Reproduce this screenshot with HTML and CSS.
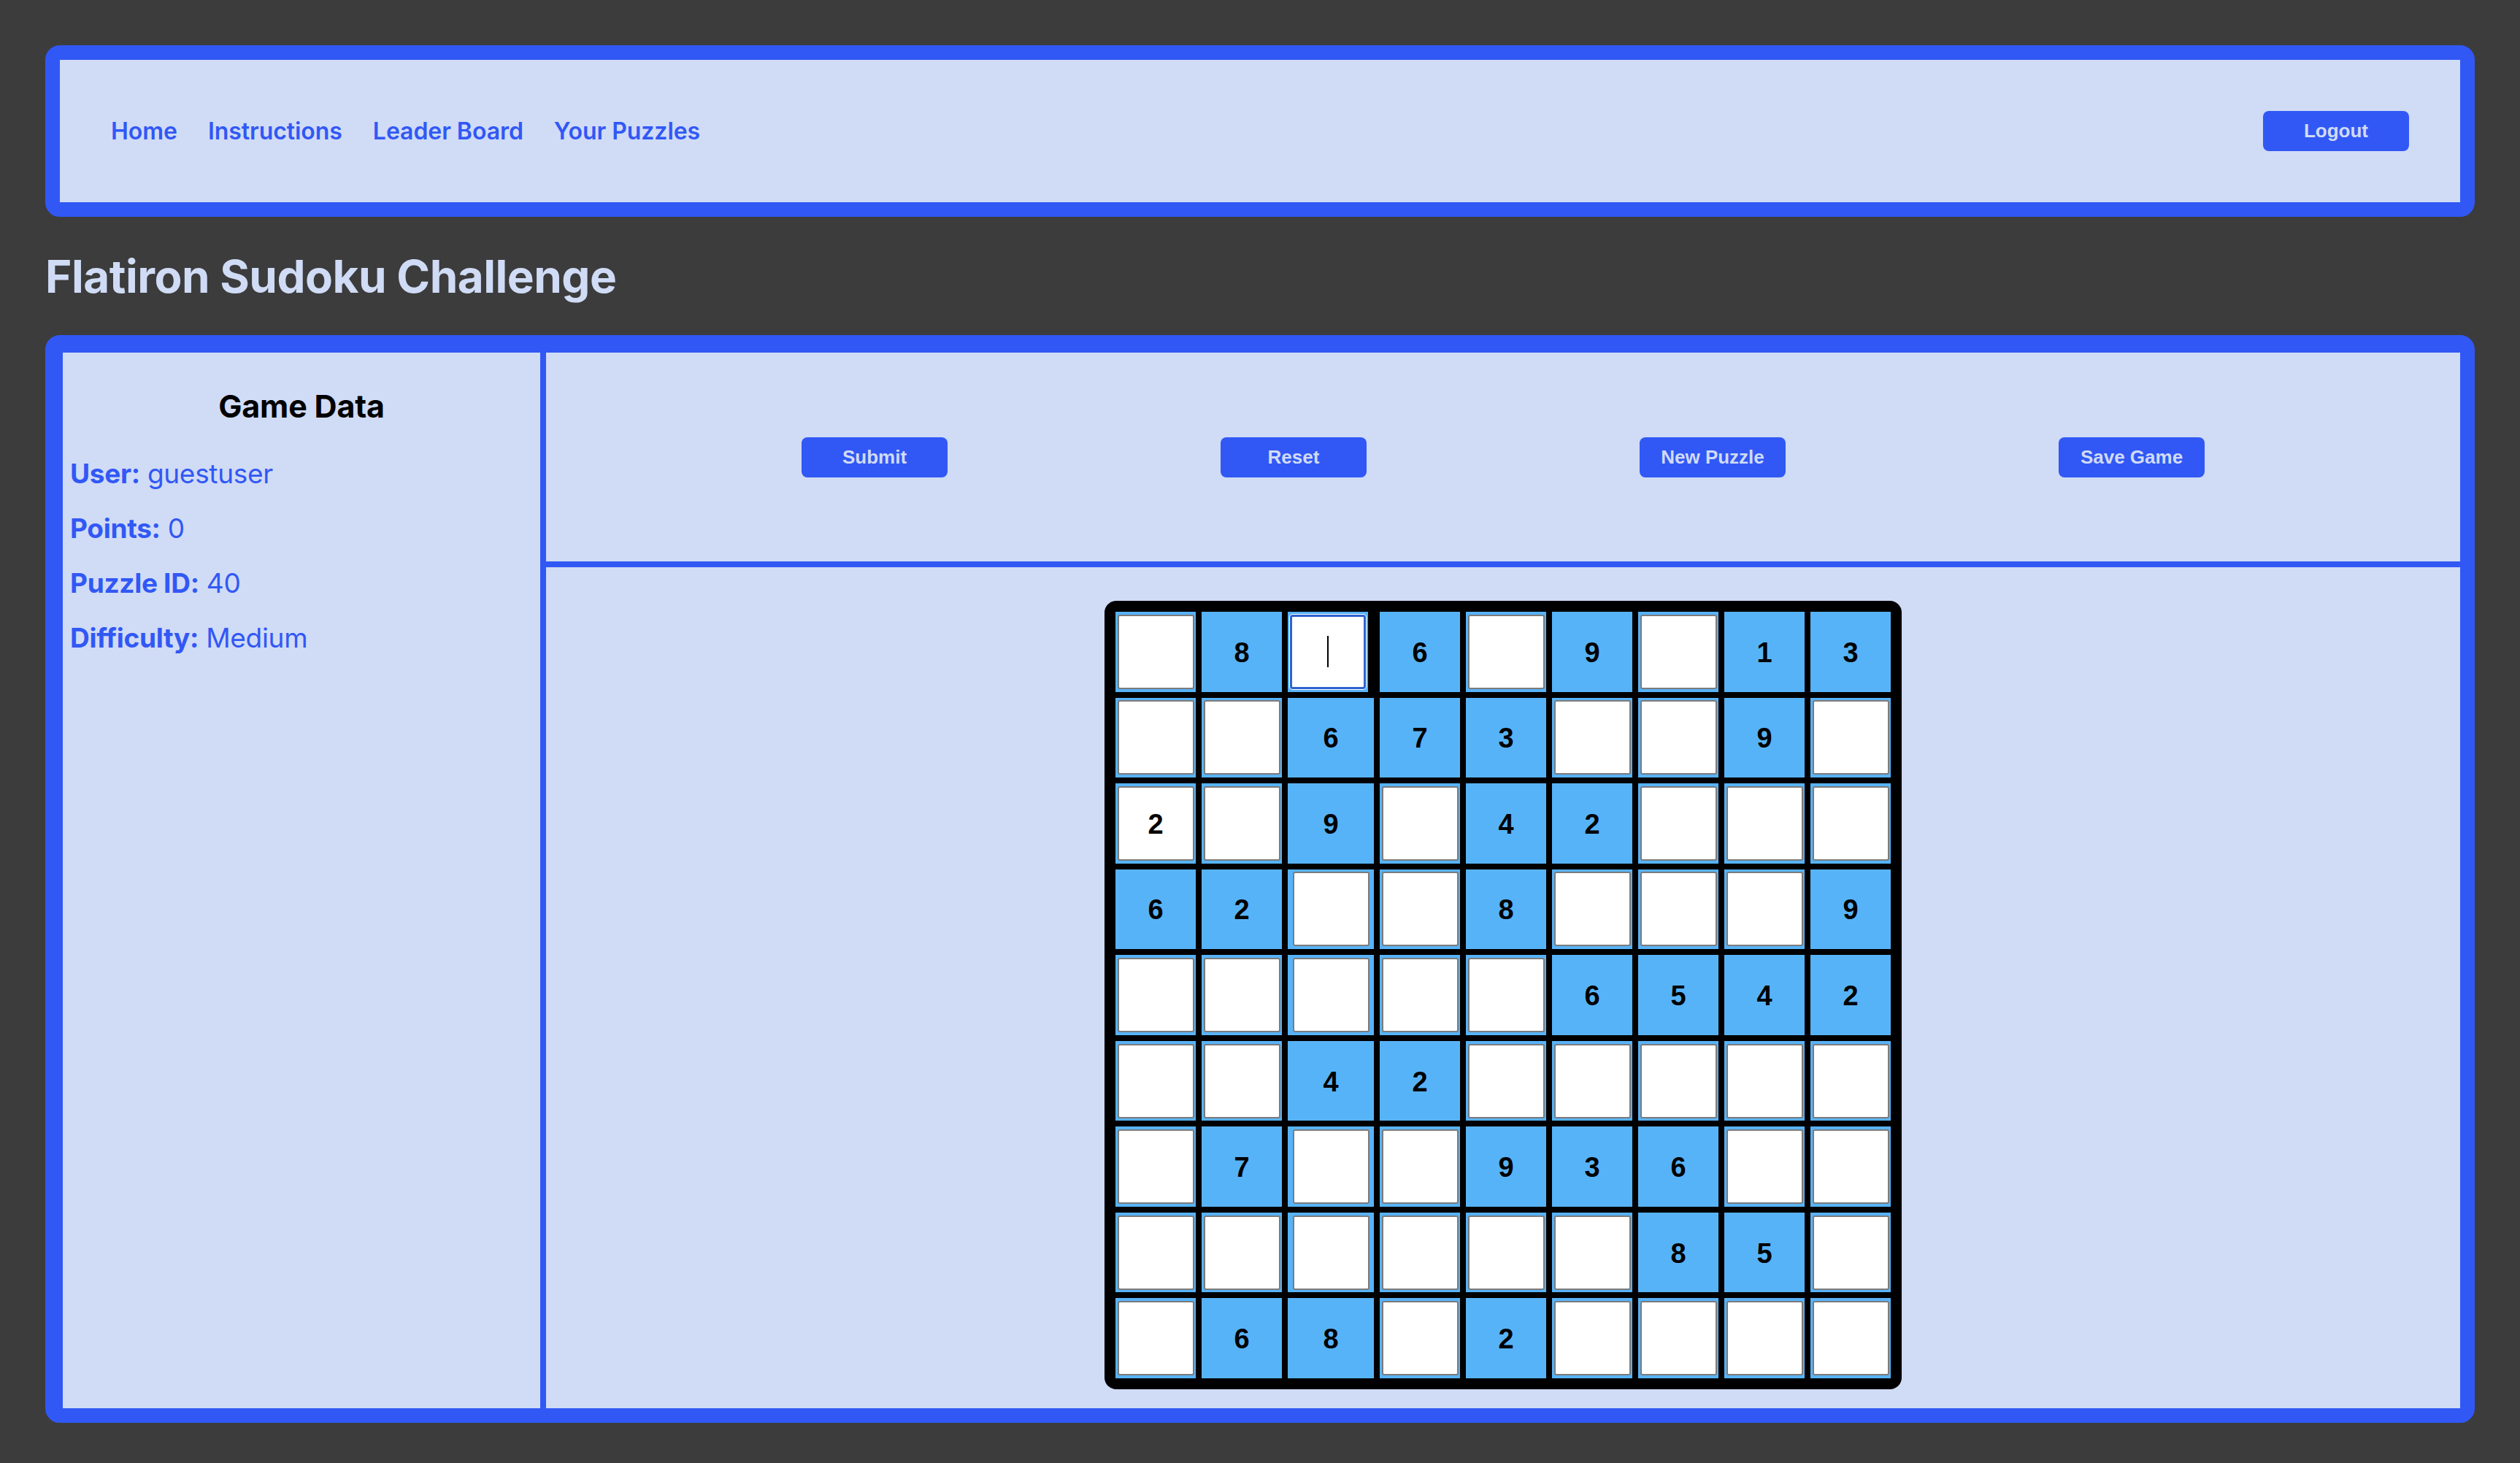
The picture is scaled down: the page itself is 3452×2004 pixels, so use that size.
FILE: index.html
```html
<!DOCTYPE html>
<html lang="en">
<head>
<meta charset="utf-8">
<title>Flatiron Sudoku Challenge</title>
<link rel="stylesheet" href="styles.css">
</head>
<body>
<div class="page">
  <nav class="topnav">
    <div class="nav-links">
      <a class="nav-link" href="#">Home</a>
      <a class="nav-link" href="#">Instructions</a>
      <a class="nav-link" href="#">Leader Board</a>
      <a class="nav-link" href="#">Your Puzzles</a>
    </div>
    <button class="btn">Logout</button>
  </nav>

  <h1 class="title">Flatiron Sudoku Challenge</h1>

  <main class="game">
    <aside class="sidebar">
      <h2 class="sidebar-title">Game Data</h2>
      <p class="stat"><b>User:</b> guestuser</p>
      <p class="stat"><b>Points:</b> 0</p>
      <p class="stat"><b>Puzzle ID:</b> 40</p>
      <p class="stat"><b>Difficulty:</b> Medium</p>
    </aside>
    <section class="play">
      <div class="actions">
        <button class="btn">Submit</button>
        <button class="btn">Reset</button>
        <button class="btn">New Puzzle</button>
        <button class="btn">Save Game</button>
      </div>
      <div class="grid-area">
        <div class="board">
          <!-- row 1 -->
          <div class="cell"><div class="entry"></div></div>
          <div class="cell">8</div>
          <div class="cell cell--short"><div class="entry entry--focus"><span class="caret"></span></div></div>
          <div class="cell">6</div>
          <div class="cell"><div class="entry"></div></div>
          <div class="cell">9</div>
          <div class="cell"><div class="entry"></div></div>
          <div class="cell">1</div>
          <div class="cell">3</div>
          <!-- row 2 -->
          <div class="cell"><div class="entry"></div></div>
          <div class="cell"><div class="entry"></div></div>
          <div class="cell">6</div>
          <div class="cell">7</div>
          <div class="cell">3</div>
          <div class="cell"><div class="entry"></div></div>
          <div class="cell"><div class="entry"></div></div>
          <div class="cell">9</div>
          <div class="cell"><div class="entry"></div></div>
          <!-- row 3 -->
          <div class="cell"><div class="entry">2</div></div>
          <div class="cell"><div class="entry"></div></div>
          <div class="cell">9</div>
          <div class="cell"><div class="entry"></div></div>
          <div class="cell">4</div>
          <div class="cell">2</div>
          <div class="cell"><div class="entry"></div></div>
          <div class="cell"><div class="entry"></div></div>
          <div class="cell"><div class="entry"></div></div>
          <!-- row 4 -->
          <div class="cell">6</div>
          <div class="cell">2</div>
          <div class="cell"><div class="entry"></div></div>
          <div class="cell"><div class="entry"></div></div>
          <div class="cell">8</div>
          <div class="cell"><div class="entry"></div></div>
          <div class="cell"><div class="entry"></div></div>
          <div class="cell"><div class="entry"></div></div>
          <div class="cell">9</div>
          <!-- row 5 -->
          <div class="cell"><div class="entry"></div></div>
          <div class="cell"><div class="entry"></div></div>
          <div class="cell"><div class="entry"></div></div>
          <div class="cell"><div class="entry"></div></div>
          <div class="cell"><div class="entry"></div></div>
          <div class="cell">6</div>
          <div class="cell">5</div>
          <div class="cell">4</div>
          <div class="cell">2</div>
          <!-- row 6 -->
          <div class="cell"><div class="entry"></div></div>
          <div class="cell"><div class="entry"></div></div>
          <div class="cell">4</div>
          <div class="cell">2</div>
          <div class="cell"><div class="entry"></div></div>
          <div class="cell"><div class="entry"></div></div>
          <div class="cell"><div class="entry"></div></div>
          <div class="cell"><div class="entry"></div></div>
          <div class="cell"><div class="entry"></div></div>
          <!-- row 7 -->
          <div class="cell"><div class="entry"></div></div>
          <div class="cell">7</div>
          <div class="cell"><div class="entry"></div></div>
          <div class="cell"><div class="entry"></div></div>
          <div class="cell">9</div>
          <div class="cell">3</div>
          <div class="cell">6</div>
          <div class="cell"><div class="entry"></div></div>
          <div class="cell"><div class="entry"></div></div>
          <!-- row 8 -->
          <div class="cell"><div class="entry"></div></div>
          <div class="cell"><div class="entry"></div></div>
          <div class="cell"><div class="entry"></div></div>
          <div class="cell"><div class="entry"></div></div>
          <div class="cell"><div class="entry"></div></div>
          <div class="cell"><div class="entry"></div></div>
          <div class="cell">8</div>
          <div class="cell">5</div>
          <div class="cell"><div class="entry"></div></div>
          <!-- row 9 -->
          <div class="cell"><div class="entry"></div></div>
          <div class="cell">6</div>
          <div class="cell">8</div>
          <div class="cell"><div class="entry"></div></div>
          <div class="cell">2</div>
          <div class="cell"><div class="entry"></div></div>
          <div class="cell"><div class="entry"></div></div>
          <div class="cell"><div class="entry"></div></div>
          <div class="cell"><div class="entry"></div></div>
        </div>
      </div>
    </section>
  </main>
</div>
</body>
</html>
```
FILE: styles.css
```css
* {
  box-sizing: border-box;
}

html,
body {
  margin: 0;
}

body {
  background: #3c3c3c;
  font-family: Inter, "Noto Sans", sans-serif;
}

.page {
  padding: 62px 62px 0;
}

/* ---------- top navigation ---------- */
.topnav {
  height: 235px;
  border: 20px solid #3158f5;
  border-radius: 20px;
  background: #d0dbf5;
  display: flex;
  align-items: center;
  justify-content: space-between;
  padding: 0 70px 0 70px;
}

.nav-links {
  display: flex;
  gap: 42px;
}

.nav-link {
  color: #3158f5;
  font-size: 32px;
  font-weight: 600;
  letter-spacing: -0.05px;
  text-decoration: none;
}

.btn {
  width: 200px;
  height: 55px;
  flex: none;
  border: 0;
  border-radius: 8px;
  background: #3158f5;
  color: #d0dbf5;
  font-family: "Liberation Sans", Arial, sans-serif;
  font-size: 26px;
  font-weight: 700;
  padding: 0;
}

/* ---------- title ---------- */
.title {
  margin: 45px 0 43px;
  font-size: 62px;
  line-height: 74px;
  font-weight: 700;
  letter-spacing: -0.5px;
  color: #d0dbf5;
}

/* ---------- game panel ---------- */
.game {
  height: 1490px;
  border: 20px solid #3158f5;
  border-radius: 20px;
  background: #d0dbf5;
  display: flex;
  overflow: hidden;
}

.sidebar {
  width: 662px;
  flex: none;
  border: 4px solid #3158f5;
  border-bottom: 0;
  padding: 48px 10px 0;
}

.sidebar-title {
  margin: 0 0 45px;
  font-size: 43px;
  line-height: 50px;
  font-weight: 700;
  letter-spacing: -0.2px;
  color: #000;
  text-align: center;
}

.stat {
  margin: 0 0 30px;
  font-size: 37px;
  line-height: 45px;
  letter-spacing: -0.3px;
  color: #3158f5;
  font-weight: 400;
}

.stat b {
  font-weight: 700;
}

.play {
  flex: 1;
  display: flex;
  flex-direction: column;
}

.actions {
  height: 294px;
  flex: none;
  border: 4px solid #3158f5;
  border-right: 0;
  display: flex;
  align-items: center;
  justify-content: center;
  gap: 374px;
}

.grid-area {
  flex: 1;
  border-top: 4px solid #3158f5;
  border-left: 4px solid #3158f5;
  display: flex;
  justify-content: center;
  align-items: flex-start;
  padding-top: 46px;
}

/* ---------- sudoku board ---------- */
.board {
  height: 1080px;
  background: #000;
  border-radius: 16px;
  padding: 15px;
  display: grid;
  grid-template-columns: 110px 110px 118px repeat(6, 110px);
  grid-template-rows: repeat(9, 1fr);
  gap: 8px;
}

.cell {
  background: #57b3f8;
  display: flex;
  align-items: center;
  justify-content: center;
  padding-top: 3px;
  font-family: "Liberation Sans", Arial, sans-serif;
  font-size: 38px;
  font-weight: 700;
  color: #000;
}

.cell--short {
  width: 110px;
  justify-self: start;
  padding-top: 0;
}

.entry {
  width: 105px;
  height: 102px;
  margin-top: -3px;
  background: #fff;
  border: 2px solid #7b7b7b;
  border-radius: 3px;
  display: flex;
  align-items: center;
  justify-content: center;
  padding-top: 3px;
}

.entry--focus {
  width: 104px;
  height: 102px;
  margin-top: 0;
  padding-top: 0;
  border: 3px solid #2f62d0;
  border-radius: 4px;
  box-shadow: 0 0 0 1px #fff;
}

.caret {
  width: 2px;
  height: 43px;
  background: #000;
}
```
